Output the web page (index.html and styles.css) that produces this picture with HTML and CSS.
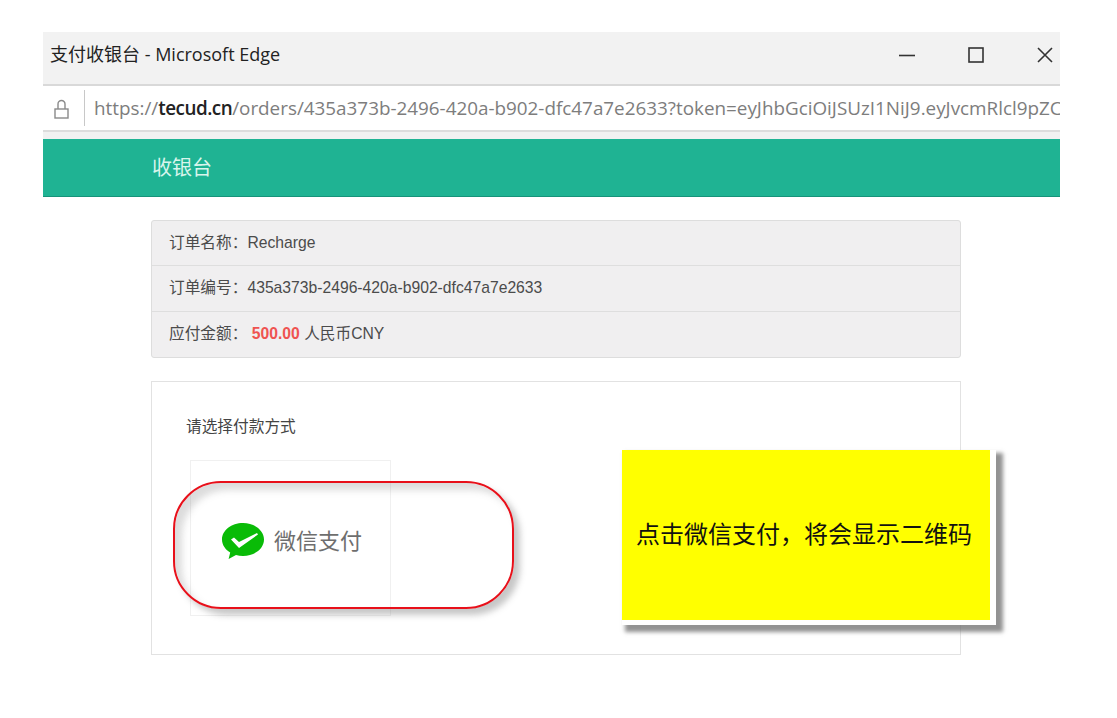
FILE: index.html
```html
<!DOCTYPE html>
<html lang="zh-CN">
<head>
<meta charset="utf-8">
<title>支付收银台 - Microsoft Edge</title>
<link rel="stylesheet" href="styles.css">
</head>
<body>
<div class="window">
  <header class="titlebar">
    <span class="title">支付收银台 - Microsoft Edge</span>
    <div class="controls">
      <svg width="18" height="18" viewBox="0 0 18 18"><path d="M1 9.500h16" stroke="#333" stroke-width="1.600" fill="none"/></svg>
      <svg width="18" height="18" viewBox="0 0 18 18"><rect x="2" y="2" width="14" height="14" stroke="#333" stroke-width="1.600" fill="none"/></svg>
      <svg width="18" height="18" viewBox="0 0 18 18"><path d="M2 2l14 14M16 2L2 16" stroke="#333" stroke-width="1.600" fill="none"/></svg>
    </div>
  </header>
  <div class="urlbar">
    <svg class="lock" width="15" height="20" viewBox="0 0 15 20"><path d="M4 10V5a3.500 3.500 0 0 1 7 0v5" stroke="#8a8a8a" stroke-width="1.400" fill="none"/><rect x="1" y="10" width="13" height="9" stroke="#8a8a8a" stroke-width="1.400" fill="none"/></svg>
    <span class="divider"></span>
    <span class="url">https://<b>tecud.cn</b>/orders/435a373b-2496-420a-b902-dfc47a7e2633?token=eyJhbGciOiJSUzI1NiJ9.eyJvcmRlcl9pZC</span>
  </div>
  <div class="gap"></div>
  <div class="brandbar"><span>收银台</span></div>
  <main class="content">
    <section class="info">
      <div class="row">订单名称<span class="colon">：</span>Recharge</div>
      <div class="row">订单编号<span class="colon">：</span>435a373b-2496-420a-b902-dfc47a7e2633</div>
      <div class="row">应付金额<span class="colon">：</span> <strong class="amount">500.00</strong> 人民币CNY</div>
    </section>
    <section class="pay">
      <h2 class="pay-title">请选择付款方式</h2>
      <div class="method">
        <svg class="wechat" width="44" height="38" viewBox="0 0 44 38">
          <path d="M22 1C10.400 1 1 8.400 1 17.500c0 5.300 3.200 10 8.200 13L7.600 37l7.400-3.900c2.200.6 4.600.9 7 .9 11.600 0 21-7.400 21-16.500S33.600 1 22 1z" fill="#09bb07"/>
          <path d="M10 17.500l3-2 5 4.500 18-9 1 1.500L18 26z" fill="#fff"/>
        </svg>
        <span class="method-name">微信支付</span>
      </div>
    </section>
  </main>
</div>
<div class="callout-ring"></div>
<div class="note">点击微信支付，将会显示二维码</div>
</body>
</html>
```
FILE: styles.css
```css
* { box-sizing: border-box; }
html, body { margin: 0; background: #fff; }
body {
  width: 1117px;
  height: 718px;
  padding: 32px 0 0 43px;
  overflow: hidden;
  position: relative;
  font-family: "Liberation Sans", "Noto Sans CJK SC", sans-serif;
}
.window { width: 1017px; }
.titlebar {
  height: 54px;
  background: #f2f2f2;
  border-bottom: 2px solid #d9d9d9;
  display: flex;
  align-items: center;
  justify-content: space-between;
  padding: 0 6px 0 7px;
}
.title {
  font: 18px/24px "Open Sans", "Noto Sans CJK SC", sans-serif;
  color: #222;
  position: relative;
  top: -4px;
}
.controls { display: flex; gap: 51px; align-items: center; position: relative; top: -3px; }
.urlbar {
  height: 46px;
  background: #fff;
  border-bottom: 2px solid #dcdcdc;
  display: flex;
  align-items: center;
  padding-left: 11px;
  overflow: hidden;
}
.lock { flex: none; position: relative; top: 1px; }
.divider {
  flex: none;
  width: 1px;
  height: 36px;
  background: #c8c8c8;
  margin: 0 9px 0 15px;
}
.url {
  font: 18.850px "Open Sans", sans-serif;
  color: #7d7d7d;
  white-space: nowrap;
}
.url b { font-weight: 600; color: #222; letter-spacing: -.5px; }
.gap { height: 7px; background: #f1f1f1; }
.brandbar {
  height: 58px;
  background: #1fb393;
  border-bottom: 1px solid #16937a;
  padding: 0 0 2px 109px;
  display: flex;
  align-items: center;
  color: #d9f5ec;
  font: 20px "Noto Sans CJK SC", sans-serif;
}
.content { padding: 23px 99px 0 108px; }
.info {
  background: #f0eff0;
  border: 1px solid #dddddd;
  border-radius: 3px;
  color: #4b4b4b;
  font-size: 15.700px;
}
.row {
  height: 45.340px;
  padding: 0 17px;
  line-height: 42px;
  white-space: pre;
  border-bottom: 1px solid #dedede;
}
.row:last-child { border-bottom: 0; }
.colon { font-family: "Noto Sans CJK TC", sans-serif; }
.amount { color: #ef5350; }
.pay {
  margin-top: 23px;
  height: 274px;
  border: 1px solid #e2e2e2;
  padding: 34px 38px 0 34px;
}
.pay-title {
  margin: 0;
  font: 400 15.700px/20px "Noto Sans CJK SC", sans-serif;
  color: #444;
}
.method {
  width: 201px;
  height: 156px;
  margin: 24px 0 0 4px;
  border: 1px solid #f0f0f0;
  display: flex;
  align-items: center;
  padding: 6px 0 0 30px;
  gap: 9px;
}
.wechat { flex: none; }
.method-name {
  font: 22px "Noto Sans CJK SC", sans-serif;
  color: #6e6e6e;
  margin-bottom: 4px;
}
.callout-ring {
  position: absolute;
  left: 173px;
  top: 481px;
  width: 341px;
  height: 128px;
  border: 2.500px solid #e8101a;
  border-radius: 48px;
  box-shadow: 6px 6px 6px rgba(130, 130, 130, .45), inset 7px 7px 7px rgba(130, 130, 130, .28);
}
.note {
  position: absolute;
  left: 622px;
  top: 450px;
  width: 374px;
  height: 175px;
  background: #ffff00;
  border-right: 6px solid #fff;
  border-bottom: 5px solid #fff;
  box-shadow: 4.500px 4.500px 4px 2px rgba(110, 110, 110, .75);
  display: flex;
  align-items: center;
  justify-content: center;
  padding: 0 4px 6px 0;
  font: 24px "Noto Sans CJK SC", sans-serif;
  color: #111;
  white-space: nowrap;
}
```
